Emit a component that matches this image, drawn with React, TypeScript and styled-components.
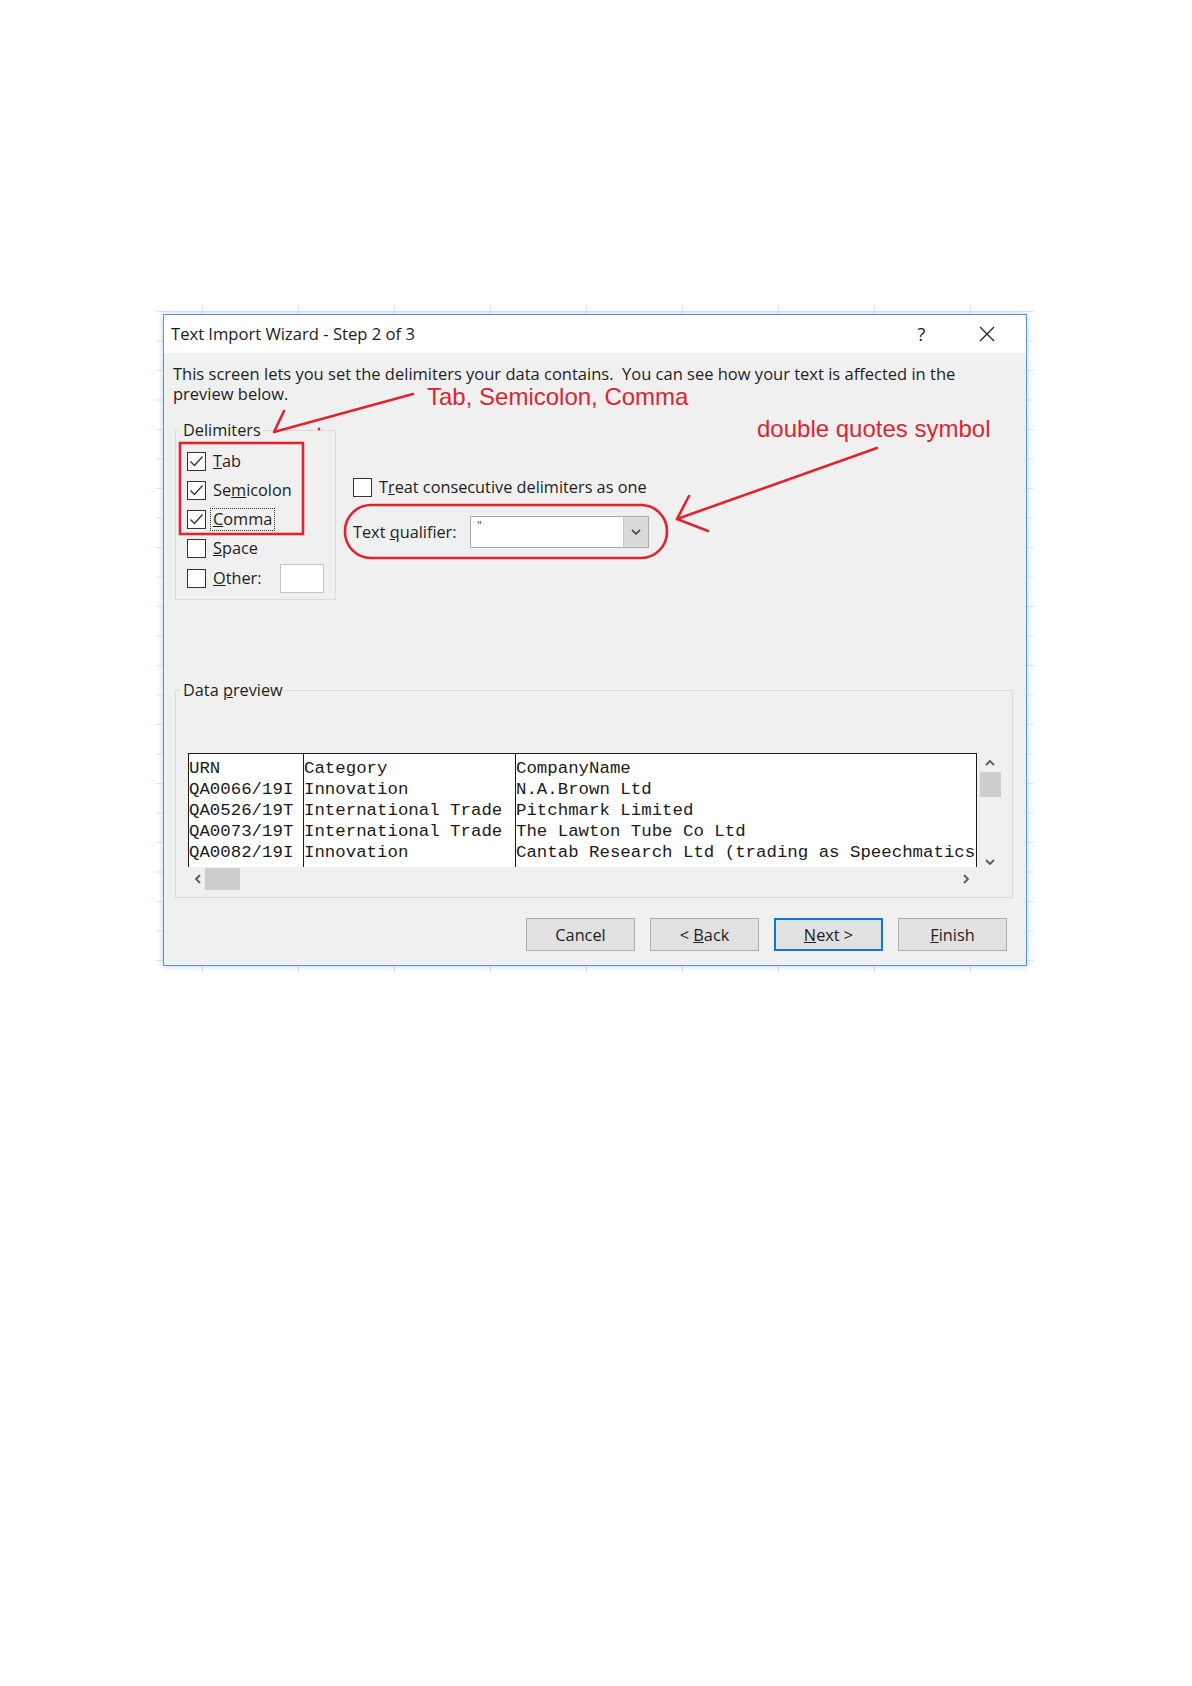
import React from 'react'
import styled, { createGlobalStyle } from 'styled-components'

const GlobalStyle = createGlobalStyle`
  html, body {
    margin: 0;
    padding: 0;
    background: #ffffff;
  }
  body {
    font-family: 'Open Sans', 'Noto Sans', sans-serif;
    color: #1e1e1e;
  }
`

const ANNOTATION_RED = '#e0242e'
const UI_FONT = '16.3px'

const Page = styled.div`
  position: relative;
  width: 1192px;
  height: 1686px;
  padding: 307px 0 0 156px;
  box-sizing: border-box;
`

const Backdrop = styled.div`
  width: 878px;
  padding: 7px;
  box-sizing: border-box;
  background-color: #ffffff;
  background-image: linear-gradient(to right, #d6dbe2 1px, transparent 1px),
    linear-gradient(to bottom, #e2e5ea 1px, transparent 1px);
  background-size: 96px 29.5px;
  background-position: 46px 4px;
`

const Dialog = styled.div`
  border: 1px solid #5796d6;
  box-shadow: 0 0 6px rgba(80, 140, 210, 0.4);
  background: #f0f0f0;
`

const TitleBar = styled.div`
  height: 38px;
  display: flex;
  align-items: center;
  background: #ffffff;
  padding: 0 7px 0 7px;
`

const Title = styled.div`
  flex: 1;
  font-size: 16.6px;
  color: #1b1b1b;
  padding-bottom: 2px;
`

const CaptionButton = styled.div`
  width: 65px;
  height: 38px;
  display: flex;
  align-items: center;
  justify-content: center;
  font-size: 18px;
  color: #1b1b1b;
`

const Body = styled.div`
  padding: 11px 13px 14px 11px;
`

const Description = styled.p`
  margin: 0 0 16px -2px;
  font-size: 16.5px;
  line-height: 20px;
  color: #1e1e1e;
`

const OptionsRow = styled.div`
  display: flex;
  gap: 17px;
  align-items: flex-start;
`

const Group = styled.fieldset<{ $width?: number }>`
  margin: 0;
  border: 1px solid #dcdcdc;
  padding: 0;
  width: ${p => (p.$width ? `${p.$width}px` : 'auto')};
  box-sizing: border-box;
`

const Legend = styled.legend`
  margin-left: 5px;
  padding: 0 2px;
  font-size: ${UI_FONT};
  line-height: 20px;
  color: #1e1e1e;
`

const DelimiterList = styled.div`
  display: flex;
  flex-direction: column;
  padding: 7px 0 5px 11px;
`

const OptionRow = styled.label<{ $height?: number }>`
  display: flex;
  align-items: center;
  height: ${p => p.$height ?? 29}px;
  font-size: ${UI_FONT};
  color: #1e1e1e;
`

const Box = styled.span`
  width: 19px;
  height: 19px;
  box-sizing: border-box;
  border: 1px solid #333333;
  background: #ffffff;
  display: flex;
  align-items: center;
  justify-content: center;
  flex: none;
`

const OptionText = styled.span<{ $focused?: boolean }>`
  margin-left: 4px;
  padding: 0 2px 1px;
  border: 1px dotted ${p => (p.$focused ? '#333333' : 'transparent')};
  line-height: 20px;
`

const OtherInput = styled.span`
  width: 44px;
  height: 29px;
  margin-left: 15px;
  box-sizing: border-box;
  border: 1px solid #c4c4c4;
  background: #ffffff;
`

const RightColumn = styled.div`
  display: flex;
  flex-direction: column;
  padding-top: 57px;
  gap: 19px;
`

const QualifierRow = styled.div`
  display: flex;
  align-items: center;
  font-size: ${UI_FONT};
`

const QualifierLabel = styled.span`
  width: 117px;
`

const Select = styled.div`
  width: 179px;
  height: 32px;
  box-sizing: border-box;
  border: 1px solid #a9a9a9;
  background: #ffffff;
  display: flex;
`

const SelectValue = styled.span`
  flex: 1;
  padding: 0 0 0 6px;
  font-size: 12px;
  line-height: 18px;
  color: #444444;
`

const DropButton = styled.span`
  width: 24px;
  background: #dadada;
  border-left: 1px solid #c6c6c6;
  display: flex;
  align-items: center;
  justify-content: center;
`

const PreviewGroup = styled(Group)`
  margin-top: 80px;
`

const PreviewFrame = styled.div`
  display: grid;
  grid-template-columns: 1fr 25px;
  grid-template-rows: 114px 24px;
  margin: 53px 10px 6px 12px;
`

const PreviewSheet = styled.div`
  display: flex;
  background: #ffffff;
  border: 1px solid #1a1a1a;
  border-bottom: none;
  overflow: hidden;
`

const PreviewColumn = styled.div<{ $width?: number; $divider?: boolean }>`
  width: ${p => (p.$width ? `${p.$width}px` : 'auto')};
  flex: ${p => (p.$width ? 'none' : '1')};
  border-left: ${p => (p.$divider ? '1px solid #1a1a1a' : 'none')};
  padding-top: 4px;
  font-family: 'Liberation Mono', 'Courier New', monospace;
  font-size: 17.4px;
  line-height: 21px;
  color: #1a1a1a;
  white-space: pre;
  overflow: hidden;
`

const VScroll = styled.div`
  display: flex;
  flex-direction: column;
  align-items: center;
  padding-top: 5px;
`

const VThumb = styled.div`
  width: 21px;
  height: 25px;
  margin: 4px 0 0 2px;
  background: #cdcdcd;
`

const HScroll = styled.div`
  display: flex;
  align-items: center;
  padding: 0 6px 0 5px;
`

const HThumb = styled.div`
  width: 35px;
  height: 22px;
  margin-left: 2px;
  background: #cdcdcd;
`

const Spacer = styled.div`
  flex: 1;
`

const ButtonRow = styled.div`
  display: flex;
  justify-content: flex-end;
  gap: 15px;
  margin-top: 20px;
  padding-right: 6px;
`

const DialogButton = styled.div<{ $default?: boolean }>`
  width: 109px;
  height: 33px;
  box-sizing: border-box;
  display: flex;
  align-items: center;
  justify-content: center;
  background: #e1e1e1;
  border: ${p => (p.$default ? '2px solid #0a78d4' : '1px solid #adadad')};
  font-size: ${UI_FONT};
  color: #1e1e1e;
  white-space: pre;
`

const Callout = styled.div<{ $x: number; $y: number }>`
  position: absolute;
  left: ${p => p.$x}px;
  top: ${p => p.$y}px;
  font-family: 'Liberation Sans', Arial, sans-serif;
  font-size: 24px;
  line-height: 24px;
  color: ${ANNOTATION_RED};
  white-space: nowrap;
`

const Overlay = styled.svg`
  position: absolute;
  left: 0;
  top: 0;
  pointer-events: none;
`

const CheckMark = () => (
  <svg width="17" height="17" viewBox="0 0 17 17">
    <polyline points="2.5,8.5 6.5,12.5 14.5,3.5" fill="none" stroke="#333" strokeWidth="1.3" />
  </svg>
)

const Chevron = ({ dir, color = '#5a5a5a' }: { dir: 'up' | 'down' | 'left' | 'right'; color?: string }) => {
  const pts = {
    up: '1,7 5,3 9,7',
    down: '1,3 5,7 9,3',
    left: '7,1 3,5 7,9',
    right: '3,1 7,5 3,9',
  }[dir]
  return (
    <svg width="10" height="10" viewBox="0 0 10 10">
      <polyline points={pts} fill="none" stroke={color} strokeWidth="1.8" />
    </svg>
  )
}

const Check = ({ checked }: { checked?: boolean }) => <Box>{checked && <CheckMark />}</Box>

const rows = [
  ['URN', 'Category', 'CompanyName'],
  ['QA0066/19I', 'Innovation', 'N.A.Brown Ltd'],
  ['QA0526/19T', 'International Trade', 'Pitchmark Limited'],
  ['QA0073/19T', 'International Trade', 'The Lawton Tube Co Ltd'],
  ['QA0082/19I', 'Innovation', 'Cantab Research Ltd (trading as Speechmatics)'],
]

const App = () => {
  return (
    <>
      <GlobalStyle />
      <Page>
        <Backdrop>
          <Dialog>
            <TitleBar>
              <Title>Text Import Wizard - Step 2 of 3</Title>
              <CaptionButton>?</CaptionButton>
              <CaptionButton>
                <svg width="16" height="16" viewBox="0 0 16 16">
                  <path d="M1 1 L15 15 M15 1 L1 15" stroke="#1b1b1b" strokeWidth="1.2" />
                </svg>
              </CaptionButton>
            </TitleBar>
            <Body>
              <Description>
                This screen lets you set the delimiters your data contains.&nbsp; You can see how your text is affected in the
                <br />
                preview below.
              </Description>
              <OptionsRow>
                <Group $width={161}>
                  <Legend>Delimiters</Legend>
                  <DelimiterList>
                    <OptionRow>
                      <Check checked />
                      <OptionText><u>T</u>ab</OptionText>
                    </OptionRow>
                    <OptionRow>
                      <Check checked />
                      <OptionText>Se<u>m</u>icolon</OptionText>
                    </OptionRow>
                    <OptionRow>
                      <Check checked />
                      <OptionText $focused><u>C</u>omma</OptionText>
                    </OptionRow>
                    <OptionRow>
                      <Check />
                      <OptionText><u>S</u>pace</OptionText>
                    </OptionRow>
                    <OptionRow $height={31}>
                      <Check />
                      <OptionText><u>O</u>ther:</OptionText>
                      <OtherInput />
                    </OptionRow>
                  </DelimiterList>
                </Group>
                <RightColumn>
                  <OptionRow $height={20}>
                    <Check />
                    <OptionText>T<u>r</u>eat consecutive delimiters as one</OptionText>
                  </OptionRow>
                  <QualifierRow>
                    <QualifierLabel>Text <u>q</u>ualifier:</QualifierLabel>
                    <Select>
                      <SelectValue>"</SelectValue>
                      <DropButton>
                        <Chevron dir="down" color="#555" />
                      </DropButton>
                    </Select>
                  </QualifierRow>
                </RightColumn>
              </OptionsRow>
              <PreviewGroup>
                <Legend>Data <u>p</u>review</Legend>
                <PreviewFrame>
                  <PreviewSheet>
                    <PreviewColumn $width={114}>{rows.map(r => r[0]).join('\n')}</PreviewColumn>
                    <PreviewColumn $width={211} $divider>{rows.map(r => r[1]).join('\n')}</PreviewColumn>
                    <PreviewColumn $divider>{rows.map(r => r[2]).join('\n')}</PreviewColumn>
                  </PreviewSheet>
                  <VScroll>
                    <Chevron dir="up" />
                    <VThumb />
                    <Spacer />
                    <Chevron dir="down" />
                  </VScroll>
                  <HScroll>
                    <Chevron dir="left" />
                    <HThumb />
                    <Spacer />
                    <Chevron dir="right" />
                  </HScroll>
                </PreviewFrame>
              </PreviewGroup>
              <ButtonRow>
                <DialogButton>Cancel</DialogButton>
                <DialogButton>{'< '}<u>B</u>ack</DialogButton>
                <DialogButton $default><u>N</u>ext{' >'}</DialogButton>
                <DialogButton><u>F</u>inish</DialogButton>
              </ButtonRow>
            </Body>
          </Dialog>
        </Backdrop>

        <Overlay width="1192" height="1686" viewBox="0 0 1192 1686">
          <g fill="none" stroke={ANNOTATION_RED} strokeWidth="2.6" strokeLinecap="round" strokeLinejoin="round">
            <polyline points="413,394 274,432 284,411" />
            <polyline points="877,448 677,519" />
            <polyline points="689,496 677,519 708,531" />
            <rect x="180" y="443" width="123" height="91" strokeLinecap="butt" strokeLinejoin="miter" />
            <rect x="345" y="505" width="322" height="53" rx="26" />
          </g>
          <circle cx="319" cy="429" r="1.4" fill={ANNOTATION_RED} />
        </Overlay>
        <Callout $x={427} $y={385}>Tab, Semicolon, Comma</Callout>
        <Callout $x={757} $y={417}>double quotes symbol</Callout>
      </Page>
    </>
  )
}

export default App
